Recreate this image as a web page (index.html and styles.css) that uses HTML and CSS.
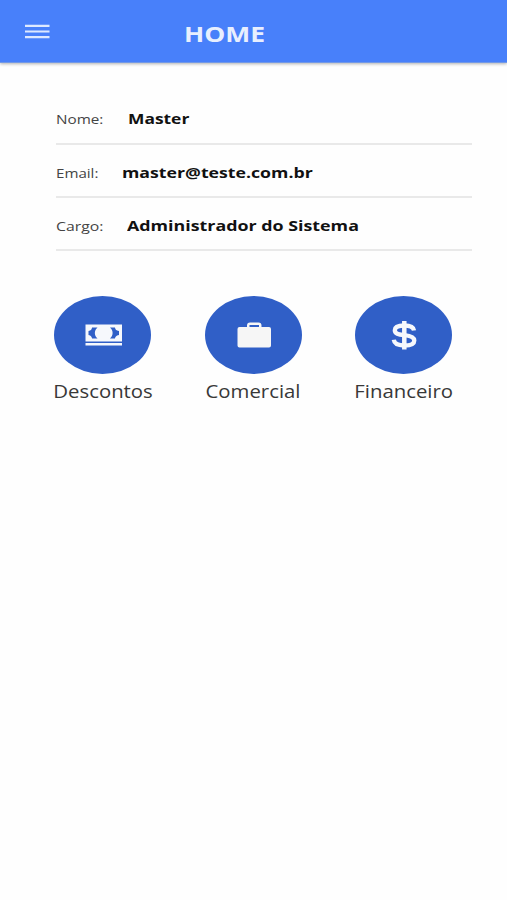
FILE: index.html
```
<!DOCTYPE html>
<html lang="pt-BR">
<head>
<meta charset="utf-8">
<title>Home</title>
<link rel="stylesheet" href="styles.css">
</head>
<body>
<header class="topbar">
  <button class="menu" aria-label="Menu"><svg width="25" height="15" viewBox="0 0 25 15"><path fill="#dde9ff" d="M0 .8h24.500v2.200H0zM0 6.400h24.500v2.200H0zM0 12h24.500v2.200H0z"/></svg></button>
  <h1 class="title">HOME</h1>
</header>
<main>
  <dl class="profile">
    <div class="row"><dt class="label label-nome">Nome:</dt><dd class="value value-nome">Master</dd></div>
    <div class="row"><dt class="label label-email">Email:</dt><dd class="value value-email">master@teste.com.br</dd></div>
    <div class="row"><dt class="label label-cargo">Cargo:</dt><dd class="value value-cargo">Administrador do Sistema</dd></div>
  </dl>
  <nav class="actions">
    <a class="action">
      <span class="disc"><svg width="97" height="78" viewBox="0 0 97 78"><path fill="#f6f8fc" fill-rule="evenodd" d="M31.500 28.500h36.500v17H31.500zM38 31.500c0 1.500-1 3-3.500 3.500v4c2.500.5 3.500 2 3.500 3.500h5.500c-3.500-3-3.500-8 0-11zM56 31.500c3.500 3 3.500 8 0 11h5c0-1.500 1-3 4-3.500v-4c-3-.5-4-2-4-3.500z"/><path fill="#f6f8fc" d="M31.500 47h36.500v2.500H31.500z"/></svg></span>
      <span class="caption caption-desc">Descontos</span>
    </a>
    <a class="action">
      <span class="disc"><svg width="97" height="78" viewBox="0 0 97 78"><path fill="#f6f6f6" fill-rule="evenodd" d="M34.500 31h7.500v-1.500q0-3 3-3h8.500q3 0 3 3V31h7.500q2 0 2 2v16.500q0 2-2 2H34.500q-2 0-2-2V33q0-2 2-2zM44.500 31h9.500v-2h-9.500z"/></svg></span>
      <span class="caption caption-com">Comercial</span>
    </a>
    <a class="action">
      <span class="disc"><svg width="97" height="78" viewBox="0 0 97 78" fill="none" stroke="#f6f8fc"><path stroke-width="4.300" d="M59 34.500c-.5-3.500-4-5-9.700-5-5.500 0-9.500 1.300-9.500 4.700 0 3.300 3.500 4.300 9.500 5s10 1.800 10 5.300c0 3.800-4 5-10 5-6.500 0-10-1.500-10.500-5.700"/><path stroke-width="4.500" d="M49.300 25v28.500"/></svg></span>
      <span class="caption caption-fin">Financeiro</span>
    </a>
  </nav>
</main>
</body>
</html>
```
FILE: styles.css
```
* { box-sizing: border-box; }
body {
  margin: 0;
  min-height: 900px;
  background: #fefefe;
  color: #111;
  font-family: "Open Sans", "Noto Sans", sans-serif;
}
.topbar {
  display: flex;
  height: 63px;
  padding-left: 25px;
  background: #4880fa;
  border-bottom: 1px solid #7399e6;
  box-shadow: 0 1px 3px rgba(0, 0, 0, .3);
}
.menu {
  width: 25px;
  height: 15px;
  margin: 24px 0 0;
  padding: 0;
  border: 0;
  background: none;
}
.menu svg { display: block; }
.title {
  margin: 20px 0 0 134px;
  font-size: 21px;
  line-height: 28px;
  font-weight: 700;
  color: #e8effe;
  transform: scaleX(1.26);
  transform-origin: left;
}
.profile { width: 416px; margin: 28px 0 0 56px; }
.row {
  display: flex;
  align-items: center;
  height: 53px;
  padding-top: 4px;
  border-bottom: 2px solid #e9e9e9;
  white-space: nowrap;
}
.row:first-child { height: 54px; }
.label, .value { margin: 0; line-height: 20px; transform-origin: left; }
.label { font-size: 13.500px; color: #444; }
.label-nome { width: 71.500px; transform: scaleX(1.13); }
.label-email { width: 66px; transform: scaleX(1.12); }
.label-cargo { width: 70.500px; transform: scaleX(1.17); }
.value { font-size: 14.500px; font-weight: 700; transform: scaleX(1.22); }
.value-nome { transform: scaleX(1.2); }
.value-cargo { transform: scaleX(1.23); }
.actions { display: flex; gap: 53.500px; margin: 45px 0 0 54px; }
.action { display: flex; flex-direction: column; align-items: center; width: 97px; }
.disc { width: 97px; height: 78px; border-radius: 50%; background: #305fc7; }
.disc svg { display: block; }
.caption { margin-top: 4px; font-size: 18px; line-height: 26px; color: #383838; transform: scaleX(1.13); }
.caption-desc { margin-left: 1px; }
```
